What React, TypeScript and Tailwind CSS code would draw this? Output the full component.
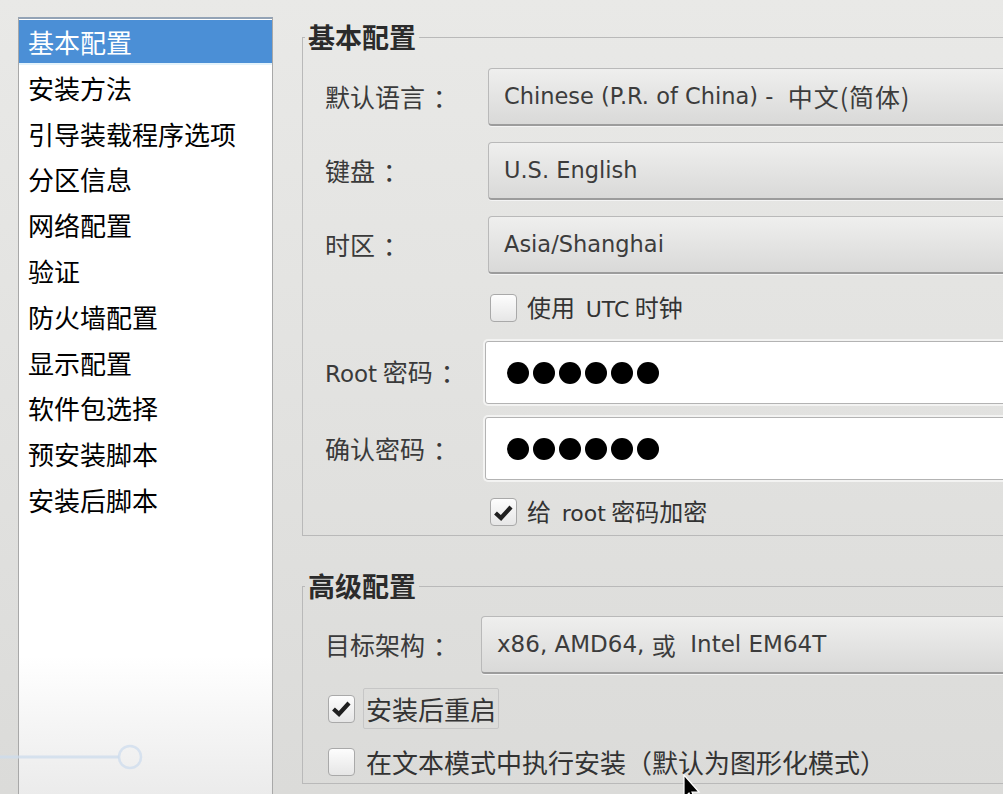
const sections = [
  "基本配置",
  "安装方法",
  "引导装载程序选项",
  "分区信息",
  "网络配置",
  "验证",
  "防火墙配置",
  "显示配置",
  "软件包选择",
  "预安装脚本",
  "安装后脚本",
];

const Colon = () => <span className="ml-[8px]">：</span>;

const Combo = ({ children, size = "text-[22.5px]" }: { children: React.ReactNode; size?: string }) => (
  <div
    className={`flex h-[58px] w-[560px] items-center whitespace-pre rounded-[4px] border border-[#b9b9b9] border-b-2 border-b-[#9c9c9c] bg-gradient-to-b from-[#efefee] to-[#d9d9d8] pl-[15px] font-['DejaVu_Sans','Noto_Sans_CJK_SC',sans-serif] text-[#3c3c3c] shadow-[0_1px_0_#f4f4f4] ${size}`}
  >
    {children}
  </div>
);

const Dots = () => (
  <div className="flex h-[63px] w-[560px] items-center gap-[4px] rounded-[3px] border border-[#b3b3b3] bg-white pl-[21px] shadow-[0_0_0_2px_#f3f3f2]">
    {[0, 1, 2, 3, 4, 5].map((i) => (
      <span key={i} className="h-[22px] w-[22px] rounded-full bg-black" />
    ))}
  </div>
);

const Check = ({ checked }: { checked?: boolean }) => (
  <span className="flex h-[28px] w-[27px] shrink-0 items-center justify-center rounded-[4px] border border-[#a9a9a9] bg-gradient-to-b from-[#fdfdfd] to-[#e6e6e6]">
    {checked && (
      <svg width="21" height="19" viewBox="0 0 21 19">
        <path d="M2.5 10 L8 15 L18 4" fill="none" stroke="#1f1f1f" strokeWidth="4.2" strokeLinejoin="miter" />
      </svg>
    )}
  </span>
);

export default function App() {
  return (
    <div className="relative h-[794px] w-full overflow-hidden bg-gradient-to-b from-[#e9e9e7] to-[#dbdbd9] font-['Noto_Sans_CJK_SC',sans-serif]">
      <div className="flex items-start">
        {/* Left section list */}
        <div className="ml-[18px] mt-[17px] flex h-[800px] w-[255px] shrink-0 flex-col border border-[#a8a8a8] border-t-2 border-t-[#93a3b6] bg-[linear-gradient(180deg,#ffffff_80%,#e8e8e8_100%)] pt-[1px]">
          {sections.map((s, i) =>
            i === 0 ? (
              <div
                key={s}
                className="flex h-[45px] items-center border-b-2 border-b-[#e4f3fb] bg-[#4b8fd6] pl-[9px] text-[26px] leading-none text-white"
              >
                {s}
              </div>
            ) : (
              <div key={s} className="flex h-[45.8px] items-center pl-[9px] text-[26px] leading-none text-black">
                {s}
              </div>
            )
          )}
        </div>

        {/* Right settings */}
        <div className="ml-[29px] mt-[22px] w-[760px] shrink-0">
          <fieldset className="border border-[#b9b9b9] p-0">
            <legend className="ml-[2px] px-[3px] text-[27px] font-bold leading-[30px] text-[#2b2b2b]">基本配置</legend>
            <div className="pb-[8px] pl-[22px] pt-[16px] text-[25px] text-[#3a3a3a]">
              <div className="flex items-center">
                <div className="w-[163px]">默认语言<Colon /></div>
                <Combo>
                  Chinese (P.R. of China) -{"  "}
                  <span className="font-['Noto_Sans_CJK_SC',sans-serif] text-[25px] tracking-[1px]">中文(简体)</span>
                </Combo>
              </div>
              <div className="mt-[16px] flex items-center">
                <div className="w-[163px]">键盘<Colon /></div>
                <Combo>U.S. English</Combo>
              </div>
              <div className="mt-[16px] flex items-center">
                <div className="w-[163px]">时区<Colon /></div>
                <Combo>Asia/Shanghai</Combo>
              </div>
              <div className="mt-[19px] flex h-[29px] items-center pl-[165px]">
                <Check />
                <span className="ml-[10px] whitespace-pre text-[24px] leading-none text-[#333]">
                  使用  <span className="font-['DejaVu_Sans',sans-serif] text-[22px]">UTC</span> 时钟
                </span>
              </div>
              <div className="mt-[19px] flex items-center">
                <div className="w-[160px]">
                  <span className="font-['DejaVu_Sans',sans-serif] text-[23px]">Root</span> 密码<Colon />
                </div>
                <Dots />
              </div>
              <div className="mt-[13px] flex items-center">
                <div className="w-[160px]">确认密码<Colon /></div>
                <Dots />
              </div>
              <div className="mt-[17px] flex h-[30px] items-center pl-[165px]">
                <Check checked />
                <span className="ml-[10px] whitespace-pre text-[24px] leading-none text-[#333]">
                  给  <span className="font-['DejaVu_Sans',sans-serif] text-[22px]">root</span> 密码加密
                </span>
              </div>
            </div>
          </fieldset>

          <fieldset className="mt-[35px] border border-[#b9b9b9] p-0">
            <legend className="ml-[2px] px-[3px] text-[27px] font-bold leading-[30px] text-[#2b2b2b]">高级配置</legend>
            <div className="pb-[1px] pl-[22px] pt-[15px] text-[25px] text-[#3a3a3a]">
              <div className="flex items-center">
                <div className="w-[156px]">目标架构<Colon /></div>
                <Combo size="text-[23px]">
                  x86, AMD64, <span className="font-['Noto_Sans_CJK_SC',sans-serif] text-[24px]">或</span>  Intel EM64T
                </Combo>
              </div>
              <div className="mt-[14px] flex h-[41px] items-center pl-[3px]">
                <Check checked />
                <span className="ml-[8px] flex h-[41px] items-center rounded-[2px] border border-[#c6c6c6] px-[2px] text-[26px] leading-none text-[#333]">
                  安装后重启
                </span>
              </div>
              <div className="mt-[12px] flex h-[41px] items-center pl-[3px]">
                <Check />
                <span className="ml-[11px] text-[26px] leading-none text-[#333]">在文本模式中执行安装（默认为图形化模式）</span>
              </div>
            </div>
          </fieldset>
        </div>
      </div>

      {/* faint decoration line with ring */}
      <svg className="pointer-events-none absolute left-0 top-[740px]" width="150" height="36" viewBox="0 0 150 36">
        <line x1="0" y1="17" x2="119" y2="17" stroke="#cddced" strokeWidth="3" opacity="0.75" />
        <circle cx="130" cy="17" r="11" fill="none" stroke="#cddced" strokeWidth="2.5" opacity="0.75" />
      </svg>

      {/* mouse cursor */}
      <svg className="pointer-events-none absolute left-[683px] top-[774px]" width="20" height="30" viewBox="0 0 20 30">
        <path d="M1 1 L1 24 L6 19 L10 28 L13 27 L9 18 L16 18 Z" fill="#000" stroke="#fff" strokeWidth="1.2" />
      </svg>
    </div>
  );
}
